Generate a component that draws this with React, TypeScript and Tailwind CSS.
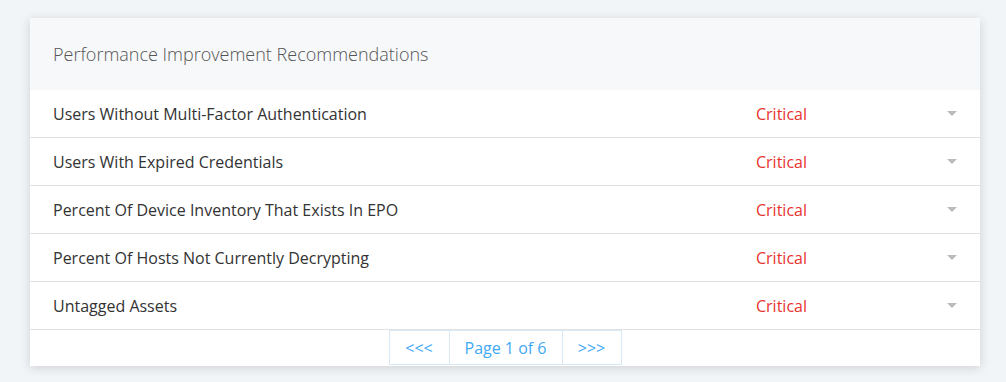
const rows = [
  'Users Without Multi-Factor Authentication',
  'Users With Expired Credentials',
  'Percent Of Device Inventory That Exists In EPO',
  'Percent Of Hosts Not Currently Decrypting',
  'Untagged Assets',
];

export default function App() {
  return (
    <div
      className="w-[1006px] h-[382px] bg-[#f2f5f8] pt-[18px] pl-[30px]"
      style={{ fontFamily: '"Open Sans", sans-serif' }}
    >
      <div className="w-[950px] bg-white shadow-[0_2px_10px_rgba(0,0,0,0.15)]">
        <div className="h-[72px] bg-[#f7f8fa] flex items-center px-[23px]">
          <h2 className="text-[18px] font-light text-[#555]">Performance Improvement Recommendations</h2>
        </div>
        {rows.map((r) => (
          <div key={r} className="h-[48px] flex items-center border-b border-[#e2e2e2] pl-[23px] pr-[23px]">
            <span className="flex-1 text-[16px] text-[#333]">{r}</span>
            <span className="w-[191px] text-[16px] text-[#e8332f]">Critical</span>
            <span className="w-0 h-0 border-l-[5px] border-r-[5px] border-t-[5px] border-l-transparent border-r-transparent border-t-[#bbb]" />
          </div>
        ))}
        <div className="h-[36px] flex justify-center items-start">
          <div className="flex h-[35px] text-[#3fa9f5] text-[16px]">
            <button className="w-[61px] border border-[#d7e9f5] flex items-center justify-center">&lt;&lt;&lt;</button>
            <span className="w-[112px] border-y border-[#d7e9f5] flex items-center justify-center">Page 1 of 6</span>
            <button className="w-[60px] border border-[#d7e9f5] flex items-center justify-center">&gt;&gt;&gt;</button>
          </div>
        </div>
      </div>
    </div>
  );
}
